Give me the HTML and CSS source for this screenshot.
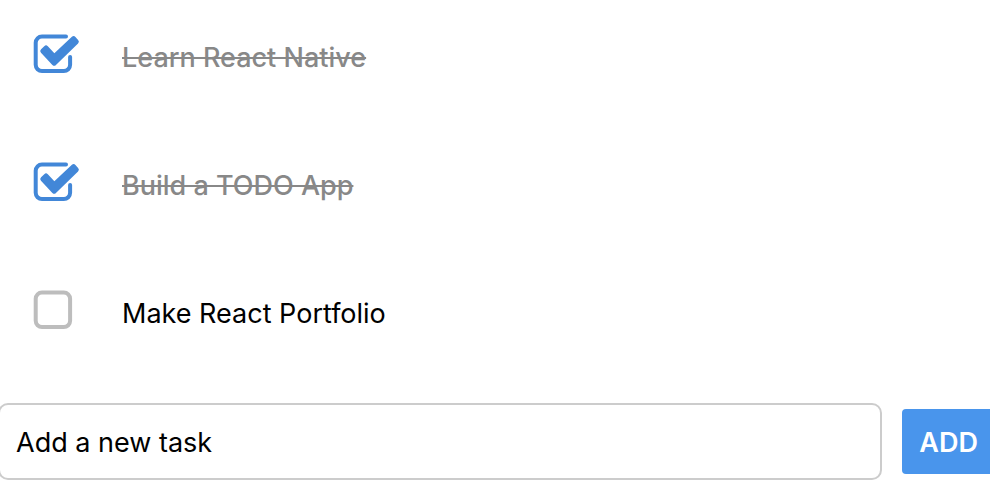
FILE: index.html
```html
<!DOCTYPE html>
<html lang="en">
<head>
<meta charset="utf-8">
<meta name="viewport" content="width=device-width, initial-scale=1">
<title>Tasks</title>
<link rel="stylesheet" href="styles.css">
</head>
<body>
<main class="app">
  <ul class="tasks">
    <li class="task">
      <span class="check">
        <input class="check-input" type="checkbox" id="task-1" checked>
        <svg class="check-mark" viewBox="0 0 48 40" aria-hidden="true">
          <path class="frame" d="M33 2.5H9A6.3 6.3 0 0 0 2.7 8.8V30.8A6.3 6.3 0 0 0 9 37.1H30.8A6.3 6.3 0 0 0 37.1 30.8V23"/>
          <path class="tick" d="M9.8 17.1L13 14L21.2 22.8L40.6 4.7L43.3 7.6L21.2 29.2Z"/>
        </svg>
      </span>
      <label class="task-name" for="task-1">Learn React Native</label>
    </li>
    <li class="task">
      <span class="check">
        <input class="check-input" type="checkbox" id="task-2" checked>
        <svg class="check-mark" viewBox="0 0 48 40" aria-hidden="true">
          <path class="frame" d="M33 2.5H9A6.3 6.3 0 0 0 2.7 8.8V30.8A6.3 6.3 0 0 0 9 37.1H30.8A6.3 6.3 0 0 0 37.1 30.8V23"/>
          <path class="tick" d="M9.8 17.1L13 14L21.2 22.8L40.6 4.7L43.3 7.6L21.2 29.2Z"/>
        </svg>
      </span>
      <label class="task-name" for="task-2">Build a TODO App</label>
    </li>
    <li class="task">
      <span class="check">
        <input class="check-input" type="checkbox" id="task-3">
        <svg class="check-mark" viewBox="0 0 48 40" aria-hidden="true">
          <rect class="frame" x="2.7" y="2.5" width="34.4" height="34.6" rx="6.3"/>
        </svg>
      </span>
      <label class="task-name" for="task-3">Make React Portfolio</label>
    </li>
  </ul>
  <form class="composer">
    <input class="new-task" type="text" placeholder="Add a new task" aria-label="Add a new task">
    <button class="add" type="button">ADD</button>
  </form>
</main>
</body>
</html>
```
FILE: styles.css
```css
* {
  box-sizing: border-box;
}

body {
  margin: 0;
  background: #fff;
  color: #000;
  font-family: Inter, "Liberation Sans", sans-serif;
  font-size: 27px;
  line-height: 40px;
  overflow-x: hidden;
}

.tasks {
  list-style: none;
  margin: 0;
  padding: 34px 33px 67px;
  display: grid;
  gap: 82px;
}

.task {
  display: flex;
  align-items: flex-start;
  gap: 41px;
}

.check {
  position: relative;
  width: 48px;
  height: 40px;
  flex: none;
}

.check-input {
  appearance: none;
  display: block;
  width: 100%;
  height: 100%;
  margin: 0;
}

.check-mark {
  position: absolute;
  inset: 0;
  width: 100%;
  height: 100%;
  fill: none;
  stroke: #bdbdbd;
  stroke-linecap: round;
  stroke-linejoin: round;
  pointer-events: none;
}

.check-input:checked + .check-mark {
  stroke: #4287d8;
}

.frame {
  stroke-width: 4;
}

.tick {
  fill: #4287d8;
  stroke-width: 5;
}

.task-name {
  padding-top: 4px;
  padding-bottom: 2px;
}

.check:has(:checked) + .task-name {
  color: #888;
  font-weight: 500;
  text-decoration: line-through 2px;
}

.composer {
  display: flex;
  align-items: center;
  gap: 20px;
  margin: 0 -5px 0 -2px;
}

.new-task {
  flex: 1;
  min-width: 0;
  padding: 18px 16px 15px;
  border: 2px solid #ccc;
  border-radius: 10px;
  background: #fff;
  color: #000;
  font: inherit;
  line-height: 40px;
}

.new-task::placeholder {
  color: #000;
  opacity: 1;
}

.add {
  padding: 14px 17px 11px;
  border: 0;
  border-radius: 4px;
  background: #4995ec;
  color: #fff;
  font: inherit;
  font-weight: 600;
}
```
